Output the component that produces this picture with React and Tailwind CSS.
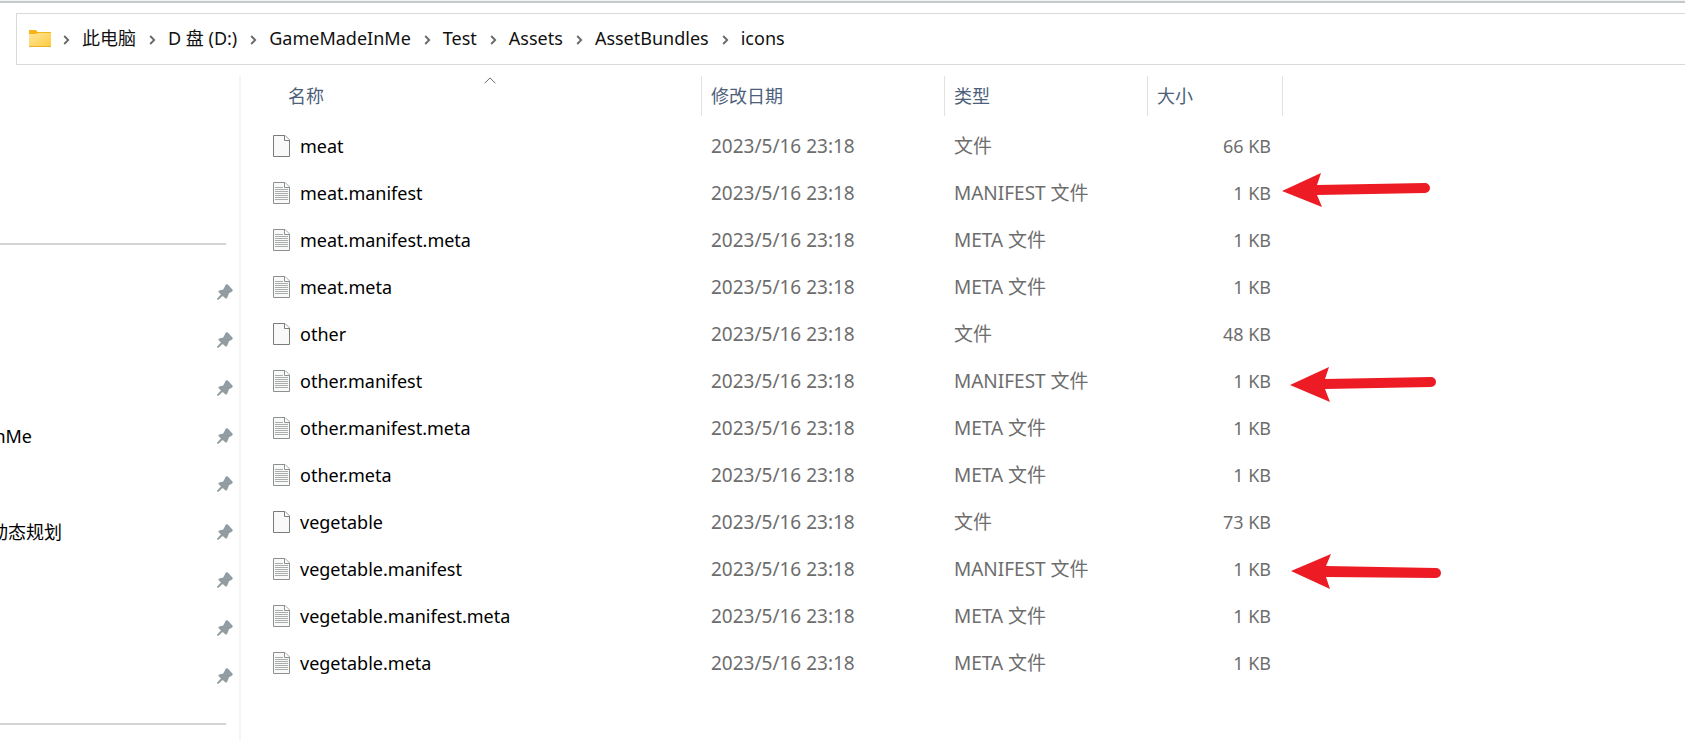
import React from "react";

const crumbs = ["此电脑", "D 盘 (D:)", "GameMadeInMe", "Test", "Assets", "AssetBundles", "icons"];

const pinned = ["", "", "", "nMe", "", "动态规划", "", "", ""];

const arrows = {
  "meat.manifest": "M-1 22 38 4 34 16 142 14A5 5 0 0 1 142 24L34 26 39 38Z",
  "other.manifest": "M7 28 46 10 42 22 148 20A5 5 0 0 1 148 30L42 32 47 45Z",
  "vegetable.manifest": "M8 26 48 9 43 21 153 23A5 5 0 0 1 153 33L43 32 47 44Z",
};

const files = [
  ["meat", "文件", "66 KB"],
  ["meat.manifest", "MANIFEST 文件", "1 KB"],
  ["meat.manifest.meta", "META 文件", "1 KB"],
  ["meat.meta", "META 文件", "1 KB"],
  ["other", "文件", "48 KB"],
  ["other.manifest", "MANIFEST 文件", "1 KB"],
  ["other.manifest.meta", "META 文件", "1 KB"],
  ["other.meta", "META 文件", "1 KB"],
  ["vegetable", "文件", "73 KB"],
  ["vegetable.manifest", "MANIFEST 文件", "1 KB"],
  ["vegetable.manifest.meta", "META 文件", "1 KB"],
  ["vegetable.meta", "META 文件", "1 KB"],
];

function FolderIcon() {
  return (
    <svg width="22" height="17" viewBox="0 0 22 17" className="shrink-0" aria-hidden="true">
      <defs>
        <linearGradient id="folder" x1="0" y1="0" x2="1" y2="1">
          <stop offset="0" stopColor="#ffe59b" />
          <stop offset="1" stopColor="#fdcb3e" />
        </linearGradient>
      </defs>
      <path d="M0 0H7L8.5 2H22V5H0Z" fill="#f7b416" />
      <path d="M0 4H7L9 3H22V17H0Z" fill="url(#folder)" />
      <path d="M0 16.5H22" stroke="#eeb02c" />
    </svg>
  );
}

function Chevron() {
  return (
    <svg width="7" height="10" viewBox="0 0 7 10" className="mx-3 mt-1 shrink-0" aria-hidden="true">
      <path d="M1.2 1 5.2 5 1.2 9" fill="none" stroke="#666" strokeWidth="1.8" />
    </svg>
  );
}

function PinIcon() {
  return (
    <svg width="16" height="16" viewBox="0 0 16 16" className="shrink-0" aria-hidden="true">
      <path
        d="M8.7.5Q9.6-.2 10.8.6L15.4 5.4Q16.2 6.4 15.2 7.4L12 9.2 9.9 14.6H8.6L5.6 11.9 1.5 15.8H.1V14.4L4 10.4 1.2 7.8 2.2 6.4 6.2 5.4 7.6 3Z"
        fill="#929da3"
      />
    </svg>
  );
}

function FileIcon({ lined }) {
  const edge = lined ? "#8c908f" : "#7b7d7c";
  return (
    <svg width="17" height="22" viewBox="0 0 17 22" className="shrink-0" aria-hidden="true">
      <path d="M.5.5H12L16.5 5V21.5H.5Z" fill="#f9f9f9" stroke={edge} />
      <path d="M11.5.5V5.5H16.5" fill="#fff" stroke={edge} />
      {lined && (
        <path d="M2 5.5H10M2 7.5H15M2 9.5H15M2 11.5H15M2 13.5H15M2 15.5H15M2 17.5H15" stroke="#a9adac" />
      )}
    </svg>
  );
}

function AddressBar() {
  return (
    <nav aria-label="路径" className="mt-[10px] ml-4 flex h-[52px] items-center border border-r-0 border-[#d9d9d9] pb-[2px] pl-3 text-[#111]">
      <FolderIcon />
      <ol className="flex items-center gap-px">
        {crumbs.map((name) => (
          <li key={name} className="flex items-center">
            <Chevron />
            <a href="#" className="whitespace-pre">{name}</a>
          </li>
        ))}
      </ol>
    </nav>
  );
}

function Sidebar() {
  return (
    <aside className="w-[241px] shrink-0 border-r-2 border-[#f5f5f5] pt-[167px]">
      <hr className="mr-[13px] border-t-2 border-[#d3d3d3]" />
      <ul className="my-[23px]">
        {pinned.map((name, i) => (
          <li key={i} className="flex h-12 items-center justify-between pr-[6px] text-black">
            {name === "nMe" ? (
              <span className="flex w-8 justify-end overflow-hidden">{name}</span>
            ) : (
              <span className="flex w-[62px] justify-end overflow-hidden whitespace-nowrap">{name}</span>
            )}
            <PinIcon />
          </li>
        ))}
      </ul>
      <hr className="mr-[13px] border-t-2 border-[#d3d3d3]" />
    </aside>
  );
}

function HeaderCell({ label, sorted }) {
  return (
    <th className="p-0 pb-[6px] text-left font-normal" aria-sort={sorted ? "ascending" : undefined}>
      <div className={sorted ? "pl-[38px]" : ""}>
        <button type="button" className="relative flex h-10 w-full items-center border-r border-[#e2e2e2] pl-[9px] text-[#4c607a]">
          {label}
          {sorted && (
            <svg width="12" height="7" viewBox="0 0 12 7" className="absolute top-px left-1/2 -translate-x-1/2" aria-hidden="true">
              <path d="M.6 6.3 6 .9 11.4 6.3" fill="none" stroke="#666" />
            </svg>
          )}
        </button>
      </div>
    </th>
  );
}

function FileTable() {
  return (
    <table className="w-[1042px] table-fixed border-collapse text-[#6d6d6d]">
      <colgroup>
        <col className="w-[461px]" />
        <col className="w-[243px]" />
        <col className="w-[203px]" />
        <col className="w-[135px]" />
      </colgroup>
      <thead>
        <tr>
          <HeaderCell label="名称" sorted />
          <HeaderCell label="修改日期" />
          <HeaderCell label="类型" />
          <HeaderCell label="大小" />
        </tr>
      </thead>
      <tbody>
        {files.map(([name, type, size]) => (
          <tr key={name} className="h-[47px]">
            <td className="p-0 pl-8 text-black">
              <span className="flex items-center gap-[10px]">
                <FileIcon lined={name.includes(".")} />
                {name}
              </span>
            </td>
            <td className="p-0 pl-[9px] text-[19px]">2023/5/16 23:18</td>
            <td className="p-0 pl-[9px] text-[19px]">{type}</td>
            <td className="relative p-0 pr-3 text-right">
              {size}
              {arrows[name] && (
                <svg width="160" height="47" viewBox="0 0 160 47" className="absolute top-0 left-full overflow-visible" aria-hidden="true">
                  <path d={arrows[name]} fill="#ed1c24" />
                </svg>
              )}
            </td>
          </tr>
        ))}
      </tbody>
    </table>
  );
}

export default function App() {
  return (
    <div className="flex min-h-screen flex-col overflow-x-hidden bg-white font-['Noto_Sans','Noto_Sans_CJK_SC',sans-serif] text-[18px] leading-6">
      <div className="h-[3px] border-b-2 border-[#c4c9cb] bg-[#f2f4f4]" />
      <AddressBar />
      <div className="mt-[11px] flex grow">
        <Sidebar />
        <main>
          <FileTable />
        </main>
      </div>
    </div>
  );
}
